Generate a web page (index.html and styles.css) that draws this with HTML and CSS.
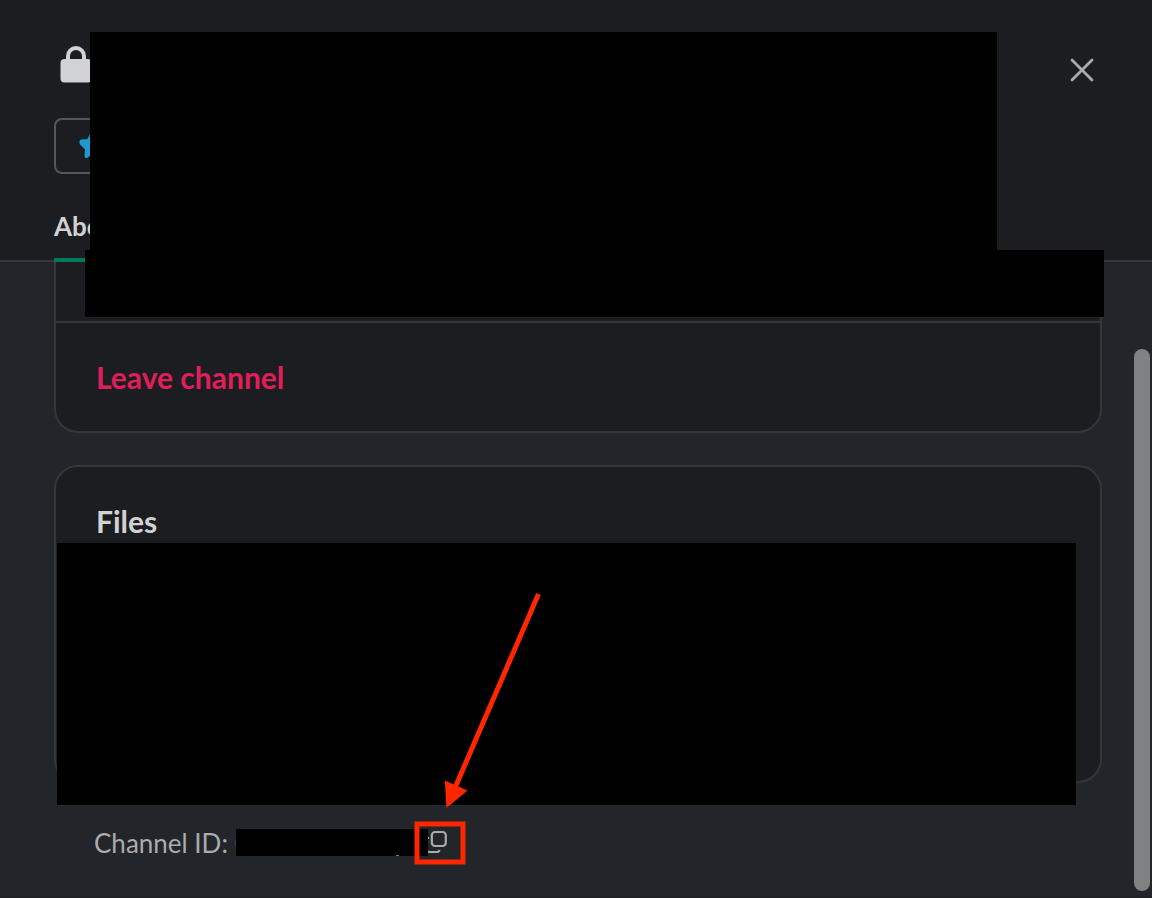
FILE: index.html
```
<!DOCTYPE html>
<html lang="en">
<head>
<meta charset="utf-8">
<title>Channel details</title>
<link rel="stylesheet" href="styles.css">
</head>
<body>
<div class="dialog">
  <header class="header">
    <div class="title-row">
      <svg class="lock" width="32" height="38" viewBox="0 0 32 38"><path d="M8 15V10a8 8 0 0 1 16 0v5" fill="none" stroke="#d1d2d3" stroke-width="4"/><rect x="0.5" y="13" width="31" height="23.500" rx="4" fill="#d1d2d3"/></svg>
      <button class="close" aria-label="Close"><svg width="24" height="24" viewBox="0 0 24 24"><path d="M2 2L22 22M22 2L2 22" stroke="#ababad" stroke-width="2.8" stroke-linecap="round"/></svg></button>
    </div>
    <button class="star" aria-label="Starred"><svg width="28" height="28" viewBox="0 0 28 28"><path d="M13.500 2L16 8.500L24.500 10L19 16L21 24L13.500 19.500L7.500 24L8 16.500L2.500 11V9.500L9.500 9Z" fill="#1d9bd1" stroke="#1d9bd1" stroke-width="4" stroke-linejoin="round"/></svg></button>
    <nav class="tabs"><span class="tab">About</span></nav>
  </header>
  <main class="content">
    <section class="card card-about">
      <div class="row-hidden"></div>
      <div class="leave">Leave channel</div>
    </section>
    <section class="card card-files"><h2>Files</h2></section>
    <footer class="channel-id">
      <span>Channel ID: C</span>
      <svg class="copy" width="24" height="24" viewBox="0 0 24 24"><rect x="7.800" y="2" width="14" height="14" rx="3.200"/><path d="M5 8H4Q2 8 2 10V18Q2 22 5.500 22H12.500Q15 22 15.500 20"/></svg>
    </footer>
  </main>
  <div class="scrollbar"></div>
  <div class="mask mask-title"></div>
  <div class="mask mask-tabs"></div>
  <div class="mask mask-files"></div>
  <div class="mask mask-id"></div>
  <i class="descender"></i>
  <svg class="arrow" width="110" height="220" viewBox="0 0 110 220"><path d="M102.500 4L18.500 199" stroke="#ff2600" stroke-width="5"/><path d="M8.800 190.500L31.500 200.500L10.500 218Z" fill="#ff2600"/></svg>
  <svg class="highlight" width="52" height="44" viewBox="0 0 52 44"><rect x="3" y="3" width="46" height="38" fill="none" stroke="#ff2600" stroke-width="5"/></svg>
</div>
</body>
</html>
```
FILE: styles.css
```
* { box-sizing: border-box; }
body { margin: 0; background: #222529; font-family: Lato, sans-serif; color: #d1d2d3; }
button { background: none; padding: 0; border: 0; }
svg { display: block; }
.dialog { position: relative; width: 1152px; height: 898px; overflow: hidden; border-bottom: 1px solid #1d1e22; }
.header { height: 262px; padding: 46px 54px 0; background: #1c1d21; border-bottom: 2px solid #35373b; }
.title-row { display: flex; justify-content: space-between; height: 72px; padding: 0 4px 0 6px; }
.close { height: 24px; margin-top: 12px; }
.star { display: flex; align-items: center; width: 120px; height: 56px; padding-left: 23px; border: 2px solid #565759; border-radius: 8px; }
.tabs { display: flex; height: 88px; padding-top: 30px; }
.tab { height: 58px; font-size: 26px; line-height: 44px; font-weight: 700; border-bottom: 4px solid #007a5a; }
.content { padding: 0 50px 0 54px; }
.card { width: 1048px; background: #1c1d21; border: 2px solid #35373b; border-radius: 24px; }
.card-about { height: 171px; border-top: 0; border-radius: 0 0 24px 24px; }
.row-hidden { height: 61px; border-bottom: 2px solid #35373b; }
.leave { padding: 32px 40px; font-size: 30px; line-height: 44px; font-weight: 700; color: #e01e5a; }
.card-files { height: 318px; margin-top: 32px; padding: 32px 40px; }
h2 { margin: 0; font-size: 30px; line-height: 44px; font-weight: 700; }
.channel-id { display: flex; height: 60px; margin-top: 30px; padding-left: 40px; font-size: 26px; line-height: 60px; color: #ababad; }
.channel-id span { width: 330px; }
.copy { margin-top: 17px; fill: none; stroke: #ababad; stroke-width: 2.200; }
.scrollbar { position: absolute; left: 1134px; top: 349px; width: 16px; height: 542px; border-radius: 8px; background: #808182; }
.mask { position: absolute; background: #000; }
.mask-title { left: 90px; top: 32px; width: 907px; height: 219px; }
.mask-tabs { left: 85px; top: 250px; width: 1019px; height: 67px; }
.mask-files { left: 57px; top: 543px; width: 1019px; height: 262px; }
.mask-id { left: 236px; top: 829px; width: 192px; height: 27px; }
.descender { position: absolute; left: 396px; top: 855px; width: 3px; height: 1px; background: #77797b; }
.arrow { position: absolute; left: 436px; top: 590px; }
.highlight { position: absolute; left: 414px; top: 821px; }
```
